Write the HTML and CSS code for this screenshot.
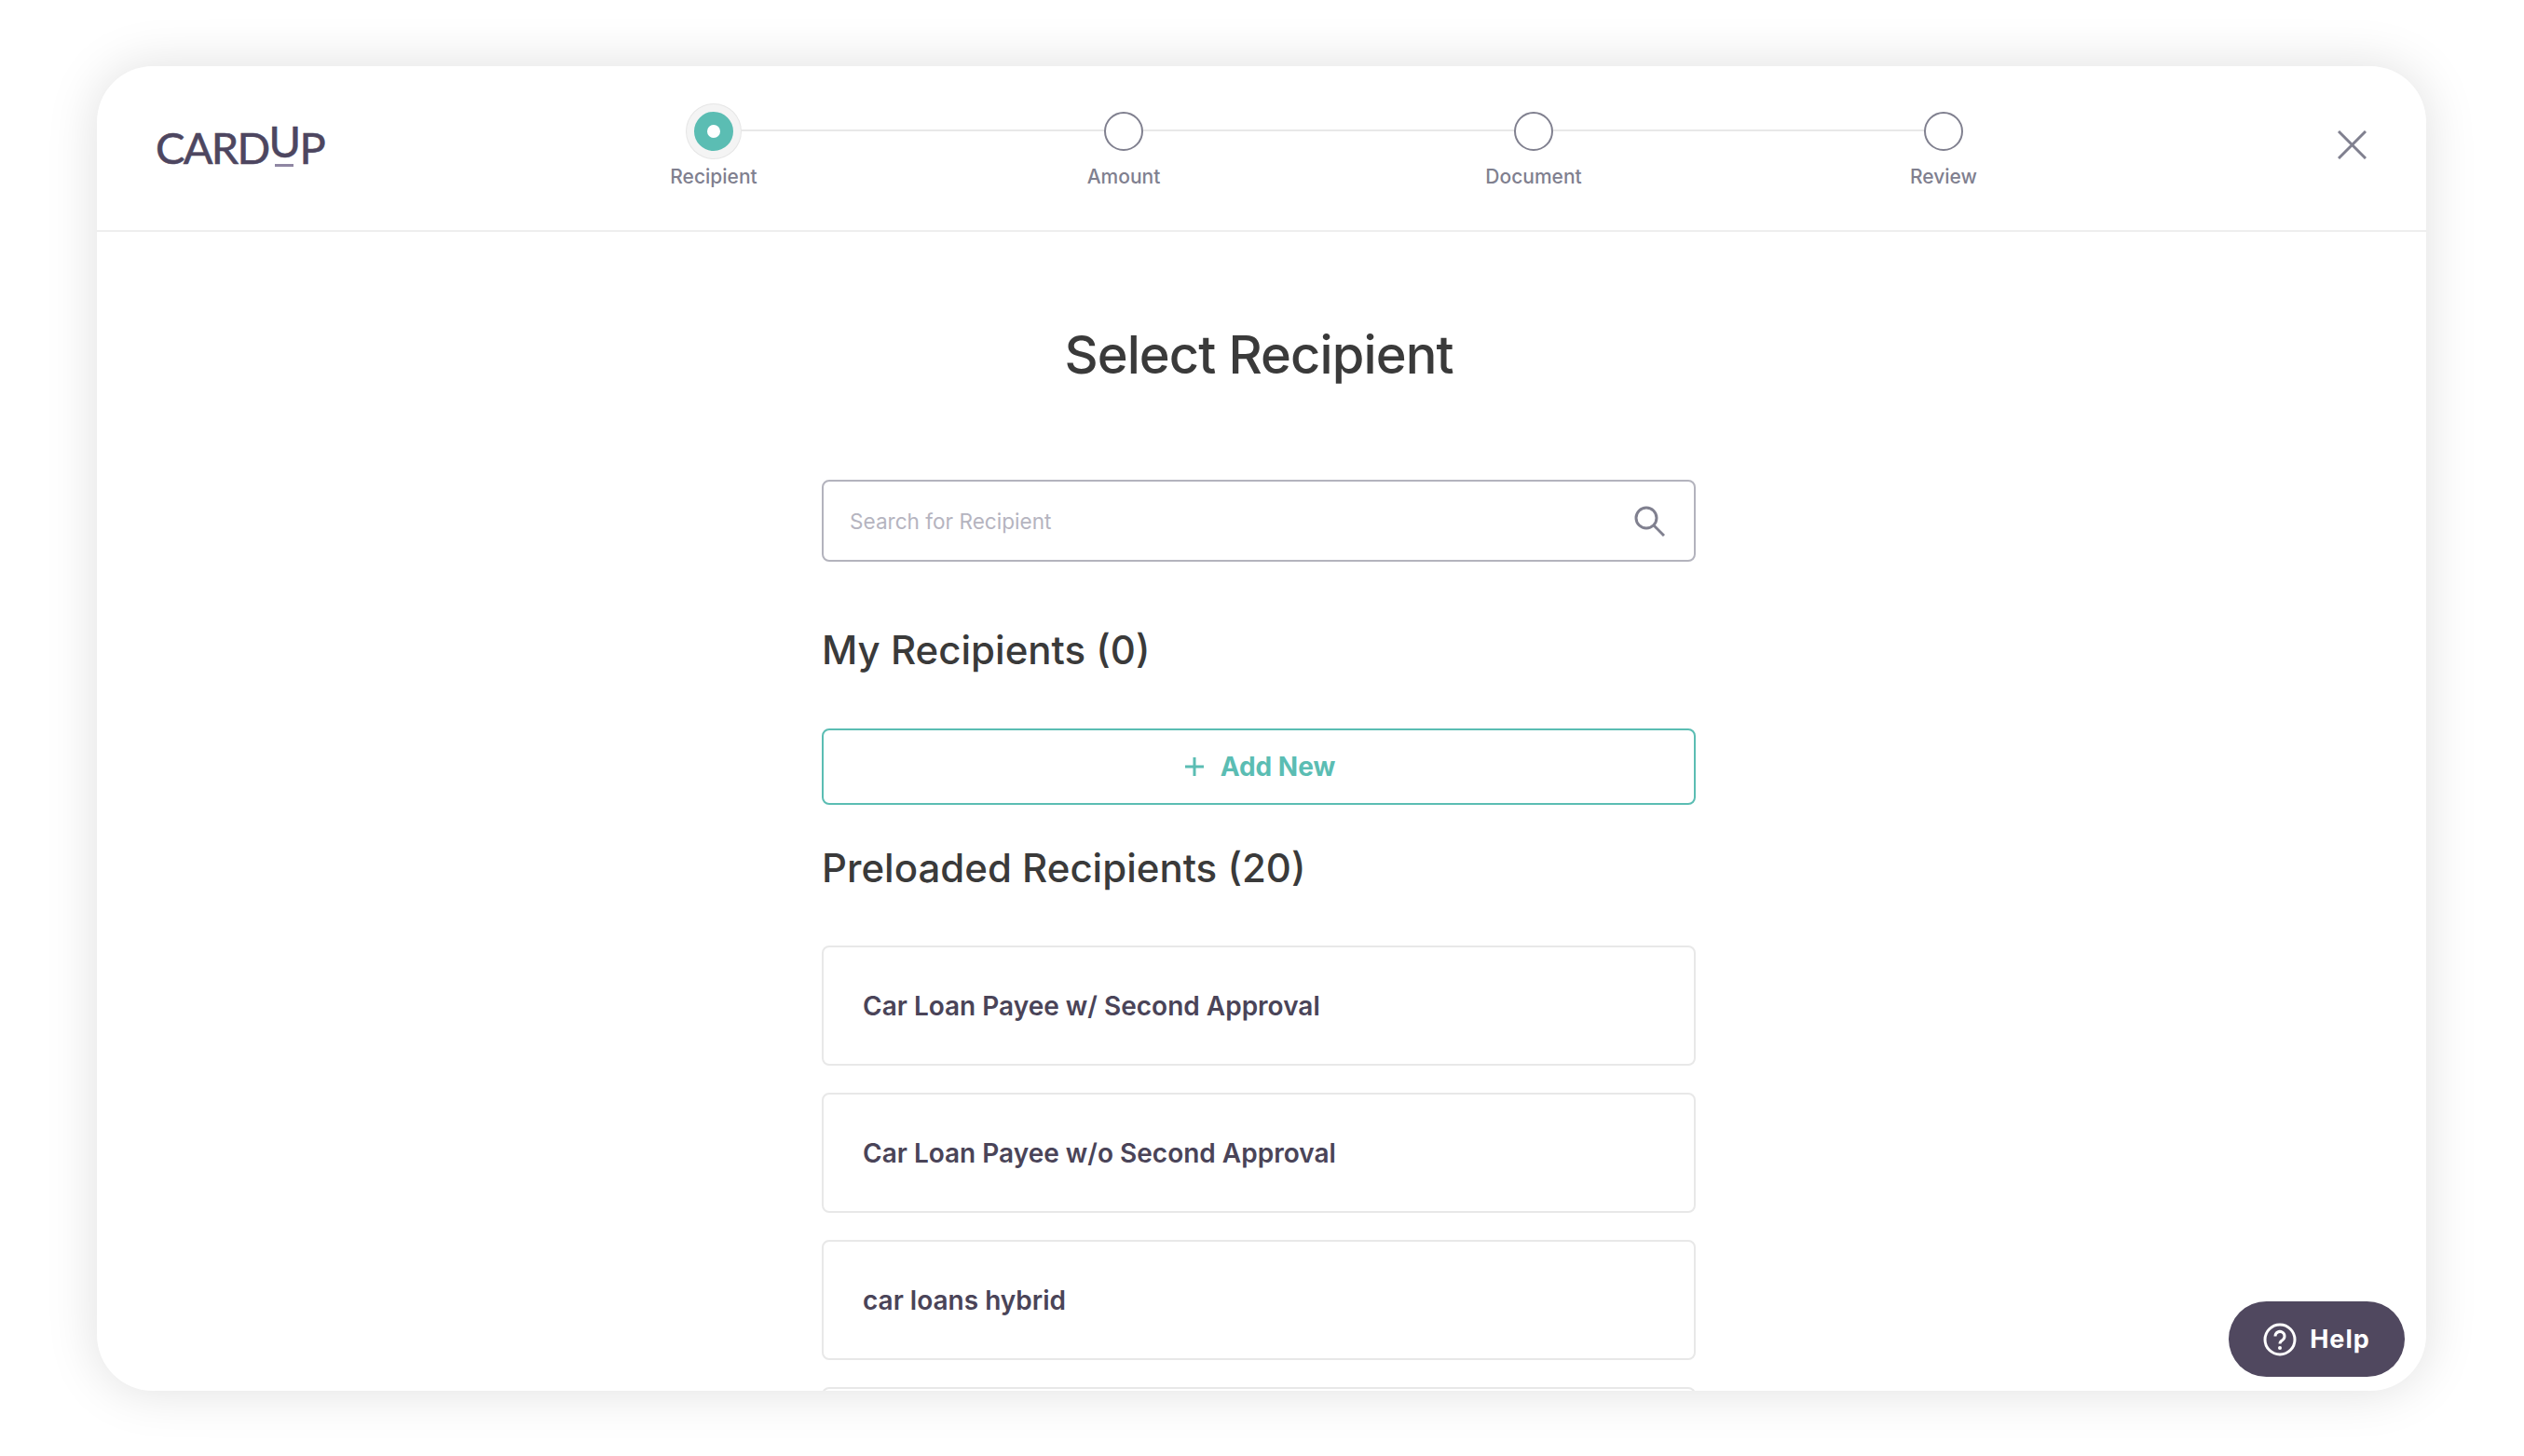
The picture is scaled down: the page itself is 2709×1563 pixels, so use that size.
FILE: index.html
```html
<!DOCTYPE html>
<html lang="en">
<head>
    <meta charset="UTF-8">
    <title>CardUp - Select Recipient</title>
    <link rel="stylesheet" href="styles.css">
</head>
<body>
    <div class="card">
        <header class="header">
            <div class="logo">CARD<span class="logo-u">U</span>P</div>
            <div class="stepper">
                <div class="step active">
                    <div class="dot"></div>
                    <span>Recipient</span>
                </div>
                <div class="step">
                    <div class="dot"></div>
                    <span>Amount</span>
                </div>
                <div class="step">
                    <div class="dot"></div>
                    <span>Document</span>
                </div>
                <div class="step">
                    <div class="dot"></div>
                    <span>Review</span>
                </div>
            </div>
            <svg class="close" viewBox="0 0 31 31" width="31" height="31">
                <path d="M1 1L30 30M30 1L1 30" fill="none" stroke="#80808f" stroke-width="3"/>
            </svg>
        </header>

        <main class="content">
            <h1>Select Recipient</h1>

            <div class="search">
                <input type="text" placeholder="Search for Recipient">
                <svg viewBox="0 0 33 33" width="33" height="33">
                    <circle cx="13" cy="13" r="11" fill="none" stroke="#80808f" stroke-width="3"/>
                    <path d="M21 21L32 32" fill="none" stroke="#80808f" stroke-width="3"/>
                </svg>
            </div>

            <h2 class="my-title">My Recipients (0)</h2>
            <button class="add-btn">
                <svg viewBox="0 0 20 20" width="20" height="20">
                    <path d="M10 0V20M0 10H20" fill="none" stroke="#5bbdb3" stroke-width="3"/>
                </svg>
                Add New
            </button>

            <h2 class="preloaded-title">Preloaded Recipients (20)</h2>
            <div class="recipient">Car Loan Payee w/ Second Approval</div>
            <div class="recipient">Car Loan Payee w/o Second Approval</div>
            <div class="recipient">car loans hybrid</div>
            <div class="recipient"></div>
        </main>

        <button class="help">
            <svg viewBox="0 0 36 36" width="36" height="36">
                <circle cx="18" cy="18" r="16" fill="none" stroke="#fff" stroke-width="3"/>
                <path d="M13 14.5a5 5 0 1 1 7.6 4.2c-1.8 1.1-2.6 2-2.6 3.8" fill="none" stroke="#fff" stroke-width="3"/>
                <circle cx="18" cy="27" r="2" fill="#fff"/>
            </svg>
            Help
        </button>
    </div>
</body>
</html>
```

FILE: styles.css
```css
* {
    box-sizing: border-box;
    margin: 0;
    padding: 0;
}
html, body {
    height: 100%;
}
body {
    background: #fff;
    font-family: Inter, 'Noto Sans', sans-serif;
    padding: 71px 105px 70px 104px;
    overflow: hidden;
}
.card {
    position: relative;
    height: 1422px;
    background: #fff;
    border-radius: 60px;
    box-shadow: 0 0 55px rgba(0,0,0,0.13);
    overflow: hidden;
}
.header {
    display: flex;
    height: 178px;
    border-bottom: 2px solid #eeeeee;
    padding-left: 63px;
}
.logo {
    width: 379px;
    padding-top: 64px;
    font-family: Lato, sans-serif;
    font-size: 47px;
    line-height: 47px;
    color: #4d4660;
    letter-spacing: -1.7px;
    white-space: nowrap;
    -webkit-text-stroke: 0.6px #4d4660;
}
.logo-u {
    display: inline-block;
    position: relative;
    top: -7px;
}
.logo-u::after {
    content: '';
    position: absolute;
    left: 6px;
    right: 6px;
    bottom: -4px;
    height: 3px;
    background: #8f86a3;
}
.stepper {
    display: flex;
    padding-top: 41px;
}
.step {
    position: relative;
    width: 440px;
    display: flex;
    flex-direction: column;
    align-items: center;
    font-size: 21px;
    font-weight: 500;
    color: #80808f;
}
.step:not(:last-child)::after {
    content: '';
    position: absolute;
    top: 27px;
    left: 50%;
    width: 100%;
    height: 2px;
    background: #e8e8e8;
}
.dot {
    position: relative;
    z-index: 1;
    width: 42px;
    height: 42px;
    margin: 8px 0;
    border: 2px solid #80808f;
    border-radius: 50%;
    background: #fff;
}
.step.active .dot {
    border: 14px solid #5bbdb3;
    box-shadow: 0 0 0 8px #f4f4f4, 0 0 0 9px #e6e6e6;
}
.step span {
    margin-top: 7px;
    line-height: 26px;
}
.close {
    margin-left: 203px;
    margin-top: 69px;
    flex: none;
}
.content {
    width: 938px;
    margin-left: 778px;
}
h1 {
    margin-top: 92px;
    font-size: 56px;
    line-height: 80px;
    font-weight: 500;
    letter-spacing: -0.9px;
    color: #3a3a3a;
    text-align: center;
}
h2 {
    font-size: 42px;
    line-height: 56px;
    font-weight: 500;
    color: #3a3a3a;
}
.search {
    display: flex;
    align-items: center;
    height: 88px;
    margin-top: 94px;
    padding: 0 31px 0 28px;
    border: 2px solid #b3b3bd;
    border-radius: 8px;
}
.search input {
    flex: 1;
    padding-top: 1px;
    border: none;
    outline: none;
    font-family: Inter, sans-serif;
    font-size: 22.6px;
    color: #3a3a3a;
}
.search input::placeholder {
    color: #b5b4bf;
}
.my-title {
    margin-top: 67px;
}
.add-btn {
    display: flex;
    align-items: center;
    justify-content: center;
    gap: 18px;
    width: 100%;
    height: 82px;
    margin-top: 56px;
    padding-left: 3px;
    background: #fff;
    border: 2px solid #5bbdb3;
    border-radius: 8px;
    font-family: Inter, sans-serif;
    font-size: 28px;
    font-weight: 700;
    color: #5bbdb3;
}
.preloaded-title {
    margin-top: 40px;
    margin-bottom: 55px;
}
.recipient {
    height: 129px;
    margin-bottom: 29px;
    padding: 1px 42px 0;
    display: flex;
    align-items: center;
    background: #fff;
    border: 2px solid #e8e8e8;
    border-radius: 8px;
    font-size: 28px;
    font-weight: 600;
    color: #4a4458;
}
.help {
    position: absolute;
    right: 23px;
    bottom: 15px;
    display: flex;
    align-items: center;
    justify-content: center;
    gap: 14px;
    width: 189px;
    height: 81px;
    background: #50485f;
    border: none;
    border-radius: 41px;
    font-family: Inter, sans-serif;
    font-size: 27px;
    font-weight: 700;
    letter-spacing: 1px;
    color: #fff;
}
```
